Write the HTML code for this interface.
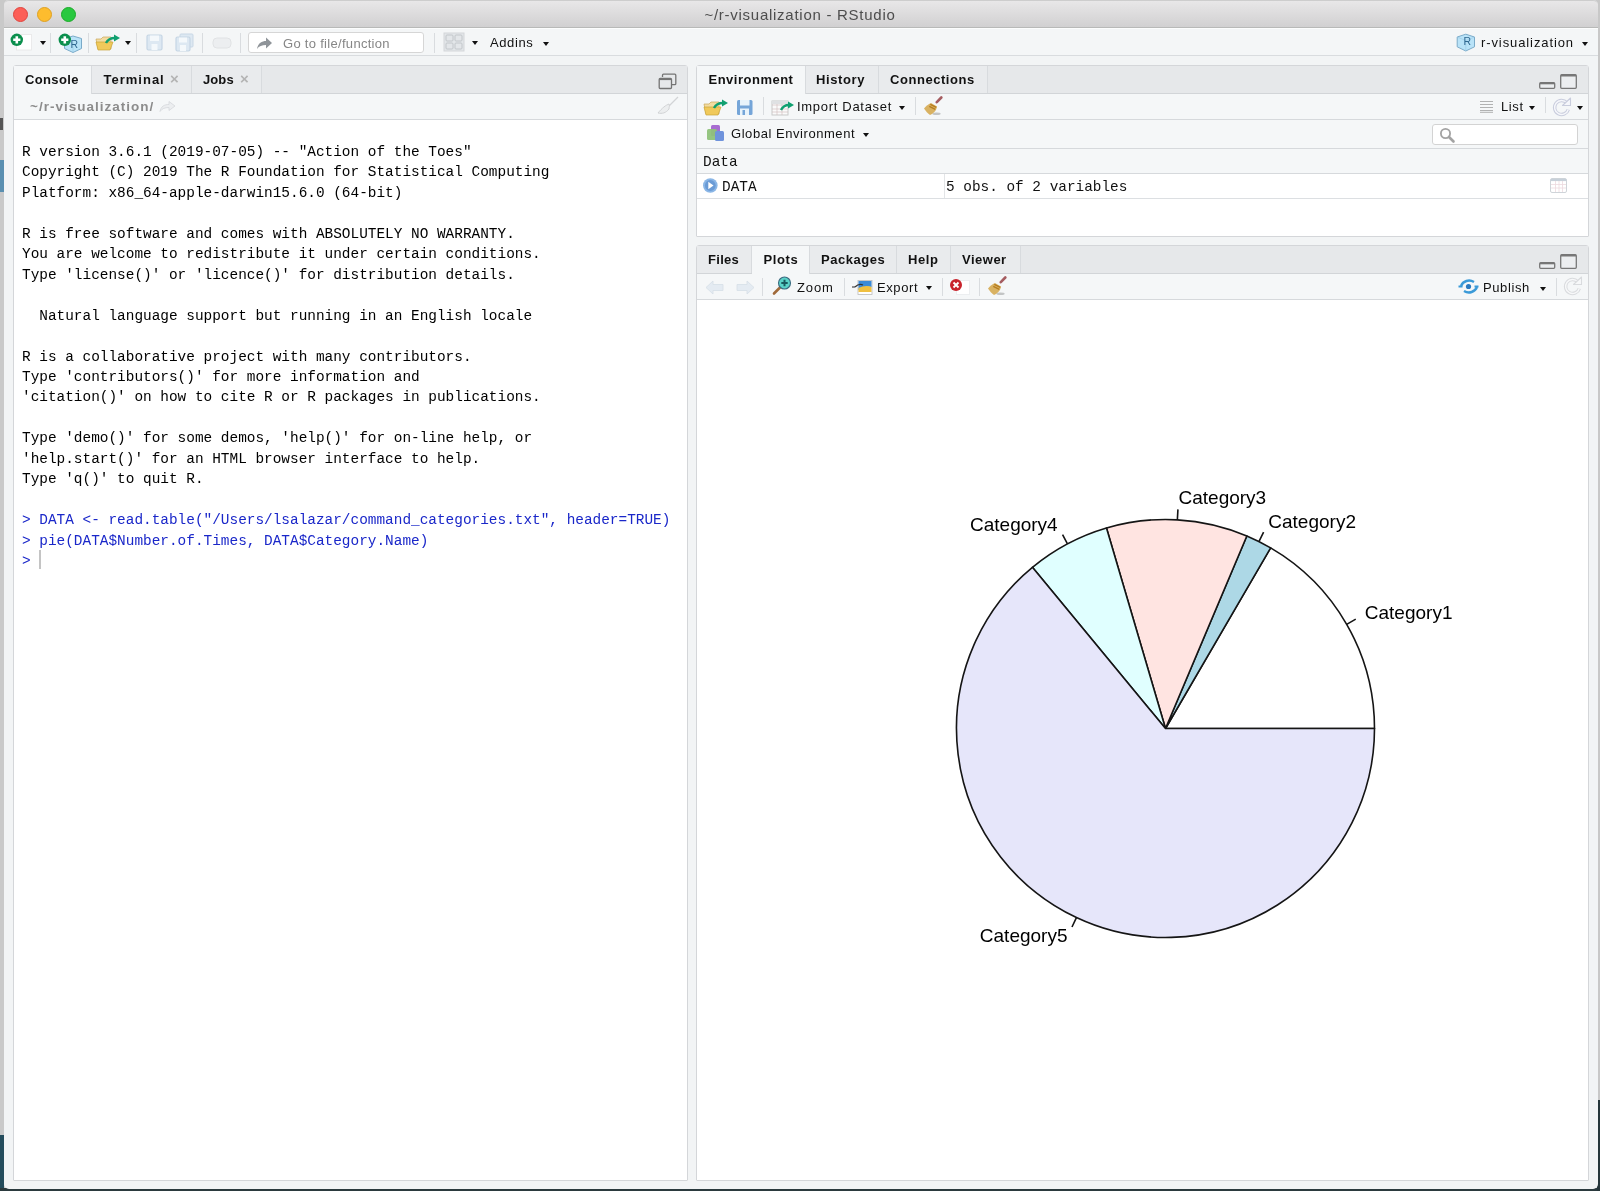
<!DOCTYPE html>
<html><head><meta charset="utf-8">
<style>
*{margin:0;padding:0;box-sizing:border-box}
html,body{width:1600px;height:1191px;overflow:hidden;background:#c9c9c9;font-family:"Liberation Sans",sans-serif;position:relative}
.a{position:absolute}
#win{left:4px;top:0;width:1594px;height:1189px;background:#f2f4f5;border-radius:5px;overflow:hidden}
#title{left:4px;top:0;width:1594px;height:28px;background:linear-gradient(#e8e7e8,#d1d0d1);border-top:1px solid #cdcdcd;border-bottom:1px solid #b8b9b8;border-radius:5px 5px 0 0}
.dot{width:15px;height:15px;border-radius:50%;top:5.5px}
#tb{left:4px;top:28px;width:1594px;height:28px;background:#f4f6f7;border-top:1px solid #fcfdfd;border-bottom:1px solid #d9dcdf}
.sep{width:1px;background:#d9dcdf}
.arr{width:0;height:0;border-left:3.5px solid transparent;border-right:3.5px solid transparent;border-top:4px solid #111}
.pane{border:1px solid #d4d6d9;background:#fff;border-radius:3px 3px 1px 1px}
.tabbar{background:#e6e8ea;border-bottom:1px solid #d2d5d8}
.tab{top:0;height:28px;border-right:1px solid #d8dbde;font-weight:bold;font-size:13px;color:#111;background:#e9ebed}
.tab span{position:absolute;top:6px}
.tab.act{background:#f5f7f8;height:28px;z-index:1}
.ptb{background:#f5f7f8;border-bottom:1px solid #d6d9dc}
.mono{font-family:"Liberation Mono",monospace}
.con{font-size:14.42px;line-height:20.45px;color:#000;white-space:pre}
.blue{color:#1a27c9}
.lbl{font-size:13px;color:#111;white-space:nowrap}
svg{position:absolute;overflow:visible}
body>*{will-change:transform}</style></head><body>
<!-- desktop edges -->
<div class="a" style="left:0;top:160px;width:4px;height:32px;background:#5a8fb0"></div>
<div class="a" style="left:0;top:118px;width:3px;height:12px;background:#555"></div>
<div class="a" style="left:0;top:1135px;width:4px;height:56px;background:#244c5c"></div>
<div class="a" style="left:0;top:1188px;width:1600px;height:3px;background:#2b3a3e"></div>
<div class="a" style="left:1598px;top:0;width:2px;height:1191px;background:#c8c8c8"></div>
<div class="a" style="left:1597px;top:1100px;width:3px;height:91px;background:#26363a"></div>

<div id="win" class="a"></div>
<div id="title" class="a">
  <div class="a dot" style="left:9px;background:#fc5f57;border:1px solid #e0443e"></div>
  <div class="a dot" style="left:32.5px;background:#fdbc2e;border:1px solid #dea123"></div>
  <div class="a dot" style="left:57px;background:#29c840;border:1px solid #1aab29"></div>
</div>
<div class="a" style="left:0;top:6px;width:1600px;text-align:center;font-size:15px;letter-spacing:0.73px;color:#4d4d4d">~/r-visualization - RStudio</div>

<!-- main toolbar -->
<div id="tb" class="a"></div>
<svg style="left:10px;top:32px" width="24" height="20" viewBox="0 0 24 20">
  <rect x="6.5" y="2.5" width="15" height="15.5" fill="#fff" stroke="#e6e6e6" stroke-width="0.8"/>
  <circle cx="6.8" cy="7.8" r="6.2" fill="#0b8f4d"/>
  <path d="M6.8 4.2v7.2M3.2 7.8h7.2" stroke="#fff" stroke-width="2.6"/>
</svg>
<div class="a arr" style="left:39.5px;top:41px"></div>
<div class="a sep" style="left:50px;top:33px;height:20px"></div>
<svg style="left:58px;top:32px" width="26" height="22" viewBox="0 0 26 22">
  <path d="M6.5 6.5L15 4 23.5 6.5V16.5L15 20.5 6.5 16.5z" fill="#b9e3f8" stroke="#7aaac8" stroke-width="1"/>
  <path d="M15 10V20" stroke="#9ccbe6" stroke-width="0.7"/>
  <text x="12.5" y="15.5" font-family="Liberation Sans" font-size="10.5" fill="#2f6890">R</text>
  <circle cx="6.8" cy="7.8" r="6.2" fill="#0b8f4d"/>
  <path d="M6.8 4.2v7.2M3.2 7.8h7.2" stroke="#fff" stroke-width="2.6"/>
</svg>
<div class="a sep" style="left:88px;top:33px;height:20px"></div>
<svg style="left:95px;top:33px" width="28" height="18" viewBox="0 0 28 18">
  <path d="M1 6h5l2-2h8v12H3z" fill="#f3dca0" stroke="#c9a85a" stroke-width="0.7"/>
  <path d="M1 9h17l-3 8H3z" fill="#f0c95a" stroke="#c9a43a" stroke-width="0.7"/>
  <path d="M11 10c2-4 5-5 9-5" stroke="#10a070" stroke-width="2.4" fill="none"/>
  <path d="M19 1.5l6 3.5-6 3.5z" fill="#10a070"/>
</svg>
<div class="a arr" style="left:124.5px;top:41px"></div>
<div class="a sep" style="left:136px;top:33px;height:20px"></div>
<svg style="left:146px;top:34px" width="18" height="17" viewBox="0 0 18 17">
  <rect x="1" y="1" width="15" height="15" rx="1.5" fill="#dde8f2" stroke="#c5d5e4" stroke-width="1.2"/>
  <rect x="4" y="1.5" width="9" height="5.5" fill="#f4f8fb"/><rect x="5.5" y="10" width="6" height="6" fill="#f4f8fb"/>
</svg>
<svg style="left:175px;top:33px" width="20" height="19" viewBox="0 0 20 19">
  <rect x="5" y="1" width="13" height="13" rx="1" fill="#dde8f2" stroke="#c8d7e5"/>
  <rect x="1" y="4" width="14" height="14" rx="1.5" fill="#dde8f2" stroke="#c5d5e4" stroke-width="1.2"/>
  <rect x="4" y="4.5" width="8" height="5" fill="#f4f8fb"/><rect x="5" y="12" width="6" height="6" fill="#f4f8fb"/>
</svg>
<div class="a sep" style="left:202px;top:33px;height:20px"></div>
<svg style="left:212px;top:37px" width="20" height="12" viewBox="0 0 20 12">
  <rect x="1" y="1" width="18" height="10" rx="4" fill="#eceef0" stroke="#e0e2e4"/>
</svg>
<div class="a sep" style="left:239.5px;top:33px;height:20px"></div>
<div class="a" style="left:248px;top:32px;width:176px;height:21px;background:#fff;border:1px solid #d6d6d6;border-radius:3px"></div>
<svg style="left:256px;top:36px" width="17" height="14" viewBox="0 0 17 14">
  <path d="M1 13c1-6 5-8 9-8V1.5l6 5.5-6 5.5V9c-4 0-7 1-9 4z" fill="#8f9499"/>
</svg>
<div class="a lbl" style="left:282.5px;top:36px;color:#868686;letter-spacing:0.3px">Go to file/function</div>
<div class="a sep" style="left:434px;top:33px;height:20px"></div>
<svg style="left:443px;top:32px" width="22" height="20" viewBox="0 0 22 20">
  <rect x="1" y="1" width="20" height="18" fill="#e3e6e9" stroke="#d3d6d9"/>
  <rect x="3" y="3" width="7" height="6" rx="1" fill="none" stroke="#c2c6ca"/>
  <rect x="12" y="3" width="7" height="6" rx="1" fill="none" stroke="#c2c6ca"/>
  <rect x="3" y="11" width="7" height="6" rx="1" fill="none" stroke="#c2c6ca"/>
  <rect x="12" y="11" width="7" height="6" rx="1" fill="none" stroke="#c2c6ca"/>
</svg>
<div class="a arr" style="left:472px;top:41px"></div>
<div class="a lbl" style="left:489.5px;top:35px;letter-spacing:0.6px">Addins</div>
<div class="a arr" style="left:542.5px;top:41.5px"></div>
<svg style="left:1456px;top:33px" width="20" height="20" viewBox="0 0 20 20">
  <path d="M1.2 4L9.8 1.2 18.5 4V13.8L9.8 18 1.2 13.8z" fill="#b9e3f8" stroke="#7aaac8" stroke-width="1"/>
  <path d="M1.5 4.2L9.8 7.5 18.3 4.2M9.8 7.5V17.5" stroke="#9ccbe6" stroke-width="0.7" fill="none"/>
  <text x="7.6" y="11.8" font-family="Liberation Sans" font-size="10.5" fill="#2f6890">R</text>
</svg>
<div class="a lbl" style="left:1480.5px;top:35px;letter-spacing:0.9px">r-visualization</div>
<div class="a arr" style="left:1582px;top:41.5px"></div>

<!-- ============ left pane ============ -->
<div class="a pane" style="left:13px;top:65px;width:675px;height:1116px"></div>
<div class="a tabbar" style="left:14px;top:66px;width:673px;height:28px"></div>
<div class="a tab act" style="left:14px;top:66px;width:78px"><span style="left:11px;letter-spacing:0.35px">Console</span></div>
<div class="a tab" style="left:92px;top:66px;width:100px;height:27px"><span style="left:11.5px;letter-spacing:1px">Terminal</span><span style="left:78px;top:4px;color:#b4b4b4;font-size:15px">×</span></div>
<div class="a tab" style="left:192px;top:66px;width:70px;height:27px"><span style="left:11px;letter-spacing:0.1px">Jobs</span><span style="left:48px;top:4px;color:#b4b4b4;font-size:15px">×</span></div>
<div class="a ptb" style="left:14px;top:94px;width:673px;height:26px"></div>
<div class="a" style="left:29.5px;top:98.5px;font-size:13.5px;font-weight:bold;color:#8c8c8c;letter-spacing:1.0px;white-space:nowrap">~/r-visualization/</div>
<svg style="left:159px;top:101px" width="17" height="11" viewBox="0 0 17 11">
  <path d="M1 10.5c1-5 4-7 9-7V0.5l6 4.5-6 4.5V6.5c-4 0-7 1-9 4z" fill="#eceef0" stroke="#d4d7da" stroke-width="0.8"/>
</svg>
<!-- restore icon -->
<svg style="left:658px;top:73px" width="19" height="17" viewBox="0 0 19 17">
  <path d="M4.5 4V2.2c0-.7.4-1 1-1h11.3c.6 0 1 .3 1 1v8.5c0 .6-.4 1-1 1h-2.8" fill="none" stroke="#747474" stroke-width="1.3"/>
  <rect x="1.2" y="5.5" width="12.3" height="10" rx="1" fill="#e6e8ea" stroke="#747474" stroke-width="1.3"/>
  <path d="M1.5 6.3h11.7" stroke="#747474" stroke-width="1.6"/>
</svg>
<!-- faded broom -->
<svg style="left:656px;top:96px" width="24" height="19" viewBox="0 0 24 19">
  <path d="M22 1l-9 9" stroke="#d2d4d6" stroke-width="1.3"/>
  <path d="M13 8c-3 1-7 4-11 9 4 1 8 0 11-4 0-2 1-3 0-5z" fill="#eceeef" stroke="#d0d2d4" stroke-width="1"/>
</svg>
<div class="a mono con" style="left:22px;top:142px">R version 3.6.1 (2019-07-05) -- "Action of the Toes"
Copyright (C) 2019 The R Foundation for Statistical Computing
Platform: x86_64-apple-darwin15.6.0 (64-bit)

R is free software and comes with ABSOLUTELY NO WARRANTY.
You are welcome to redistribute it under certain conditions.
Type 'license()' or 'licence()' for distribution details.

  Natural language support but running in an English locale

R is a collaborative project with many contributors.
Type 'contributors()' for more information and
'citation()' on how to cite R or R packages in publications.

Type 'demo()' for some demos, 'help()' for on-line help, or
'help.start()' for an HTML browser interface to help.
Type 'q()' to quit R.

<span class="blue">&gt; DATA &lt;- read.table("/Users/lsalazar/command_categories.txt", header=TRUE)
&gt; pie(DATA$Number.of.Times, DATA$Category.Name)
&gt; </span></div>
<div class="a" style="left:39px;top:550px;width:2px;height:19px;background:#c4c4c4"></div>

<!-- ============ env pane ============ -->
<div class="a pane" style="left:696px;top:65px;width:893px;height:172px"></div>
<div class="a tabbar" style="left:697px;top:66px;width:891px;height:28px"></div>
<div class="a tab act" style="left:697px;top:66px;width:109px"><span style="left:11.5px;letter-spacing:0.5px">Environment</span></div>
<div class="a tab" style="left:806px;top:66px;width:73px;height:27px"><span style="left:10px;letter-spacing:0.6px">History</span></div>
<div class="a tab" style="left:879px;top:66px;width:109px;height:27px"><span style="left:11px;letter-spacing:0.55px">Connections</span></div>
<!-- min/max -->
<svg style="left:1538px;top:73px" width="42" height="17" viewBox="0 0 42 17">
  <rect x="1.7" y="9.7" width="15" height="5.6" rx="1" fill="#eceef0" stroke="#777" stroke-width="1.3"/>
  <path d="M2 10.5h14.5" stroke="#777" stroke-width="1.6"/>
  <rect x="22.7" y="1.7" width="15.6" height="13.6" rx="1" fill="#eceef0" stroke="#777" stroke-width="1.3"/>
  <path d="M23 2.6h15" stroke="#777" stroke-width="1.8"/>
</svg>
<div class="a ptb" style="left:697px;top:94px;width:891px;height:26px"></div>
<svg style="left:703px;top:98px" width="28" height="18" viewBox="0 0 28 18">
  <path d="M1 6h5l2-2h8v12H3z" fill="#f3dca0" stroke="#c9a85a" stroke-width="0.7"/>
  <path d="M1 9h17l-3 8H3z" fill="#f0c95a" stroke="#c9a43a" stroke-width="0.7"/>
  <path d="M11 10c2-4 5-5 9-5" stroke="#10a070" stroke-width="2.4" fill="none"/>
  <path d="M19 1.5l6 3.5-6 3.5z" fill="#10a070"/>
</svg>
<svg style="left:736px;top:99px" width="18" height="17" viewBox="0 0 18 17">
  <rect x="1" y="1" width="15.5" height="15" rx="1.5" fill="#75a5d8" />
  <rect x="4" y="1" width="9.5" height="5.5" fill="#e8f3fb"/><rect x="4" y="9.5" width="9" height="6.5" fill="#e8f3fb"/><rect x="6.5" y="11" width="2.5" height="5" fill="#75a5d8"/>
</svg>
<div class="a sep" style="left:763px;top:97px;height:18px"></div>
<svg style="left:771px;top:99px" width="24" height="17" viewBox="0 0 24 17">
  <rect x="1" y="2" width="16" height="14" fill="#fafafa" stroke="#c4c4c4" stroke-width="0.9"/>
  <path d="M1 6h16M1 10h16M1 13h16M6 2v14M11 2v14" stroke="#d3c0c0" stroke-width="0.7"/>
  <path d="M1 2h16v3H1z" fill="#dfe1e3"/>
  <path d="M10 11c2-4 5-5 8-5" stroke="#10a070" stroke-width="2.4" fill="none"/>
  <path d="M17 2.5l6 3.5-6 3.5z" fill="#10a070"/>
</svg>
<div class="a lbl" style="left:797px;top:99px;letter-spacing:0.7px">Import Dataset</div>
<div class="a arr" style="left:898.5px;top:106px"></div>
<div class="a sep" style="left:915px;top:97px;height:18px"></div>
<svg style="left:922px;top:96px" width="22" height="20" viewBox="0 0 22 20">
  <path d="M19.3 1.5L14.8 6.2" stroke="#a55c60" stroke-width="2.6" stroke-linecap="round"/>
  <ellipse cx="14.5" cy="17.8" rx="4.2" ry="1.3" fill="#666" opacity="0.35"/>
  <path d="M9 7L15 10.5C14.5 14 12.5 17 8 19C6 17.5 3.5 15 2 12.5C4 10 6.5 8 9 7z" fill="#d9b262"/>
  <path d="M8.3 8.3L14.3 11.3M7.3 10.3L13.3 13.3" stroke="#b57c1e" stroke-width="1.3"/>
</svg>
<!-- list / refresh -->
<svg style="left:1479px;top:100px" width="15" height="13" viewBox="0 0 15 13">
  <path d="M1 1.5h13M1 4.5h13M1 7.5h13M1 10.5h13M1 12.3h13" stroke="#a9a9a9" stroke-width="0.9"/>
</svg>
<div class="a lbl" style="left:1501px;top:99px;letter-spacing:0.6px">List</div>
<div class="a arr" style="left:1528.5px;top:106px"></div>
<div class="a sep" style="left:1545px;top:97px;height:16px"></div>
<svg style="left:1552px;top:98px" width="20" height="18" viewBox="0 0 20 18">
  <path d="M14.8 4.8A7 7 0 1 0 16.3 11.5" fill="none" stroke="#c9cddd" stroke-width="3.4"/>
  <path d="M14.8 4.8A7 7 0 1 0 16.3 11.5" fill="none" stroke="#f6f7fb" stroke-width="1.4"/>
  <path d="M10.5 7.5L18.5 7.5 18.5 0z" fill="#f6f7fb" stroke="#c9cddd" stroke-width="1.1" stroke-linejoin="round"/>
</svg>
<div class="a arr" style="left:1576.5px;top:106px"></div>
<!-- global env row -->
<div class="a ptb" style="left:697px;top:120px;width:891px;height:29px"></div>
<svg style="left:706px;top:124px" width="20" height="18" viewBox="0 0 20 18">
  <rect x="5" y="1" width="9" height="11" rx="1.5" fill="#a86dd1"/>
  <rect x="1" y="5" width="10" height="11" rx="1.5" fill="#8fc27a" opacity="0.95"/>
  <rect x="9" y="7" width="9" height="10" rx="1.5" fill="#6f93dc"/>
</svg>
<div class="a lbl" style="left:731px;top:126px;letter-spacing:0.55px">Global Environment</div>
<div class="a arr" style="left:863px;top:132.5px"></div>
<div class="a" style="left:1432px;top:124px;width:146px;height:21px;background:#fff;border:1px solid #d3d3d3;border-radius:3px"></div>
<svg style="left:1439px;top:126.5px" width="17" height="17" viewBox="0 0 17 17">
  <circle cx="6.5" cy="6.5" r="4.6" fill="none" stroke="#a3a3a3" stroke-width="1.8"/>
  <path d="M10 10l4.5 4.5" stroke="#a3a3a3" stroke-width="2.6" stroke-linecap="round"/>
</svg>
<!-- Data header -->
<div class="a ptb" style="left:697px;top:149px;width:891px;height:25px"></div>
<div class="a mono" style="left:703px;top:153.5px;font-size:14.4px;color:#111">Data</div>
<!-- DATA row -->
<div class="a" style="left:697px;top:174px;width:891px;height:25px;background:#fff;border-bottom:1px solid #dcdfe2"></div>
<div class="a" style="left:944px;top:174px;width:1px;height:24px;background:#e3e5e7"></div>
<svg style="left:703px;top:178px" width="15" height="15" viewBox="0 0 15 15">
  <circle cx="7.3" cy="7.5" r="7.3" fill="#8ab6e6"/>
  <circle cx="7.3" cy="7.5" r="5.4" fill="#6a9bd6"/>
  <path d="M5.3 3.8l5.2 3.7-5.2 3.7z" fill="#fff"/>
</svg>
<div class="a mono" style="left:722px;top:178.5px;font-size:14.4px;color:#111">DATA</div>
<div class="a mono" style="left:946px;top:178.5px;font-size:14.4px;color:#111;white-space:pre">5 obs. of 2 variables</div>
<svg style="left:1549px;top:177px" width="19" height="17" viewBox="0 0 19 17">
  <rect x="1.5" y="1.5" width="16" height="14" rx="1.5" fill="#fff" stroke="#cfd4d9"/>
  <path d="M1.8 3h15.5" stroke="#c7d0d9" stroke-width="2.2"/>
  <path d="M2 7.5h15M2 11h15M6.5 4v11M10 4v11M13.5 4v11" stroke="#ecd9de" stroke-width="0.8"/>
</svg>

<!-- ============ plots pane ============ -->
<div class="a pane" style="left:696px;top:245px;width:893px;height:936px"></div>
<div class="a tabbar" style="left:697px;top:246px;width:891px;height:28px"></div>
<div class="a tab" style="left:697px;top:246px;width:55px;height:27px"><span style="left:11px;letter-spacing:0.3px">Files</span></div>
<div class="a tab act" style="left:752px;top:246px;width:58px"><span style="left:11.5px;letter-spacing:0.6px">Plots</span></div>
<div class="a tab" style="left:810px;top:246px;width:87px;height:27px"><span style="left:11px;letter-spacing:0.55px">Packages</span></div>
<div class="a tab" style="left:897px;top:246px;width:54px;height:27px"><span style="left:11px;letter-spacing:0.6px">Help</span></div>
<div class="a tab" style="left:951px;top:246px;width:70px;height:27px"><span style="left:11px;letter-spacing:0.5px">Viewer</span></div>
<svg style="left:1538px;top:253px" width="42" height="17" viewBox="0 0 42 17">
  <rect x="1.7" y="9.7" width="15" height="5.6" rx="1" fill="#eceef0" stroke="#777" stroke-width="1.3"/>
  <path d="M2 10.5h14.5" stroke="#777" stroke-width="1.6"/>
  <rect x="22.7" y="1.7" width="15.6" height="13.6" rx="1" fill="#eceef0" stroke="#777" stroke-width="1.3"/>
  <path d="M23 2.6h15" stroke="#777" stroke-width="1.8"/>
</svg>
<div class="a ptb" style="left:697px;top:274px;width:891px;height:26px"></div>
<svg style="left:705px;top:280px" width="20" height="15" viewBox="0 0 20 15">
  <path d="M1 7.5L8 1v3.5h10v6H8V14z" fill="#e4ebf2" stroke="#d6dee6" stroke-width="0.8"/>
</svg>
<svg style="left:735px;top:280px" width="20" height="15" viewBox="0 0 20 15">
  <path d="M19 7.5L12 1v3.5H2v6h10V14z" fill="#e4ebf2" stroke="#d6dee6" stroke-width="0.8"/>
</svg>
<div class="a sep" style="left:762px;top:278px;height:18px"></div>
<svg style="left:772px;top:276px" width="20" height="19" viewBox="0 0 20 19">
  <path d="M2 17.5l6-6" stroke="#a06a3a" stroke-width="2.6" stroke-linecap="round"/>
  <circle cx="12.5" cy="7" r="6" fill="#5ad2c8" stroke="#3a6a80" stroke-width="1.1"/>
  <path d="M12.5 3.8v6.4M9.3 7h6.4" stroke="#1a5a60" stroke-width="2"/>
</svg>
<div class="a lbl" style="left:797px;top:280px;letter-spacing:0.9px">Zoom</div>
<div class="a sep" style="left:844px;top:278px;height:18px"></div>
<svg style="left:851px;top:279px" width="23" height="17" viewBox="0 0 23 17">
  <rect x="7" y="1.5" width="14" height="14" fill="#fff" stroke="#bbb" stroke-width="0.8"/>
  <path d="M7.5 2h13v6c-3-1-8 0-13 3z" fill="#3a8ad8"/>
  <path d="M7.5 9c4-2 9-3 13-1v5h-13z" fill="#f0c040"/>
  <path d="M1 8h3" stroke="#555" stroke-width="1.3"/>
  <path d="M4 8c3-3 6-3 8-2" stroke="#333" stroke-width="1.3" fill="none"/>
</svg>
<div class="a lbl" style="left:877px;top:280px;letter-spacing:0.6px">Export</div>
<div class="a arr" style="left:925.5px;top:286px"></div>
<div class="a sep" style="left:941.5px;top:278px;height:18px"></div>
<div class="a" style="left:956px;top:280px;width:14px;height:15px;background:#fff;border:1px solid #eceef0"></div>
<svg style="left:949px;top:278px" width="14" height="14" viewBox="0 0 14 14">
  <circle cx="7" cy="7" r="6" fill="#c8232c"/>
  <path d="M4.5 4.5l5 5M9.5 4.5l-5 5" stroke="#fff" stroke-width="1.9"/>
</svg>
<div class="a sep" style="left:979px;top:278px;height:18px"></div>
<svg style="left:986px;top:276px" width="22" height="20" viewBox="0 0 22 20">
  <path d="M19.3 1.5L14.8 6.2" stroke="#a55c60" stroke-width="2.6" stroke-linecap="round"/>
  <ellipse cx="14.5" cy="17.8" rx="4.2" ry="1.3" fill="#666" opacity="0.35"/>
  <path d="M9 7L15 10.5C14.5 14 12.5 17 8 19C6 17.5 3.5 15 2 12.5C4 10 6.5 8 9 7z" fill="#d9b262"/>
  <path d="M8.3 8.3L14.3 11.3M7.3 10.3L13.3 13.3" stroke="#b57c1e" stroke-width="1.3"/>
</svg>
<!-- publish -->
<svg style="left:1458px;top:278px" width="22" height="17" viewBox="0 0 22 17">
  <path d="M3 8c2-5 8-7 13-4" fill="none" stroke="#3a9ad8" stroke-width="2.4"/>
  <path d="M19 9c-2 5-8 7-13 4" fill="none" stroke="#3a9ad8" stroke-width="2.4"/>
  <circle cx="10.5" cy="8.5" r="2.6" fill="#2a7ac0"/>
  <path d="M0.5 8.5h4M16.5 8.5h4" stroke="#3a9ad8" stroke-width="1.8"/>
</svg>
<div class="a lbl" style="left:1483px;top:280px;letter-spacing:0.6px">Publish</div>
<div class="a arr" style="left:1539.5px;top:287px"></div>
<div class="a sep" style="left:1555.5px;top:278px;height:18px"></div>
<svg style="left:1563px;top:277px" width="20" height="19" viewBox="0 0 20 19">
  <path d="M14.8 4.8A7 7 0 1 0 16.3 11.5" fill="none" stroke="#d9dbde" stroke-width="3.4"/>
  <path d="M14.8 4.8A7 7 0 1 0 16.3 11.5" fill="none" stroke="#f7f8f9" stroke-width="1.4"/>
  <path d="M10.5 7.5L18.5 7.5 18.5 0z" fill="#f7f8f9" stroke="#d9dbde" stroke-width="1.1" stroke-linejoin="round"/>
</svg>

<!-- pie chart -->
<svg style="left:0;top:0" width="1600" height="1191" viewBox="0 0 1600 1191">
<g stroke="#151515" stroke-width="1.6" stroke-linejoin="round">
<path d="M1165.50 728.50L1374.50 728.50A209 209 0 0 0 1270.63 547.87Z" fill="#ffffff"/>
<path d="M1165.50 728.50L1270.63 547.87A209 209 0 0 0 1246.83 535.97Z" fill="#add8e6"/>
<path d="M1165.50 728.50L1246.83 535.97A209 209 0 0 0 1106.49 528.00Z" fill="#ffe4e1"/>
<path d="M1165.50 728.50L1106.49 528.00A209 209 0 0 0 1032.42 567.35Z" fill="#e0ffff"/>
<path d="M1165.50 728.50L1032.42 567.35A209 209 0 1 0 1374.50 728.50Z" fill="#e6e6fa"/>
<path d="M1346.68 624.32L1355.74 619.11M1258.92 541.54L1263.59 532.19M1177.35 519.84L1177.94 509.40M1067.46 543.92L1062.56 534.69M1076.43 917.57L1071.98 927.02" fill="none"/>
</g>
<g font-family="Liberation Sans" font-size="19" fill="#000">
<text x="1364.8" y="619.2">Category1</text>
<text x="1268.3" y="528.1">Category2</text>
<text x="1178.5" y="504.3">Category3</text>
<text x="1057.7" y="530.8" text-anchor="end">Category4</text>
<text x="1067.5" y="941.8" text-anchor="end">Category5</text>
</g>
</svg>
</body></html>
